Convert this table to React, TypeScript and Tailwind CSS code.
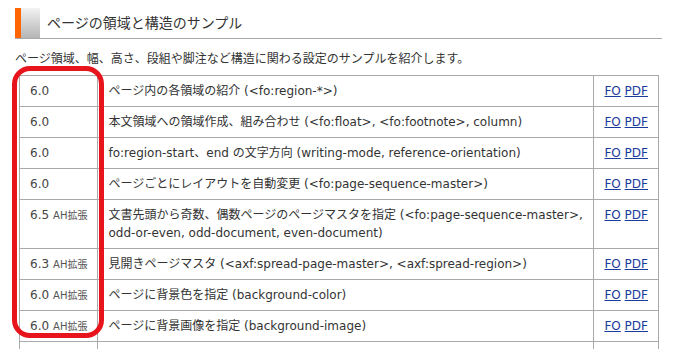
import React from 'react';

type Sample = {
  version: string;
  ext?: boolean;
  lines: string[];
};

const samples: Sample[] = [
  { version: '6.0', lines: ['ページ内の各領域の紹介 (<fo:region-*>)'] },
  { version: '6.0', lines: ['本文領域への領域作成、組み合わせ (<fo:float>, <fo:footnote>, column)'] },
  { version: '6.0', lines: ['fo:region-start、end の文字方向 (writing-mode, reference-orientation)'] },
  { version: '6.0', lines: ['ページごとにレイアウトを自動変更 (<fo:page-sequence-master>)'] },
  {
    version: '6.5',
    ext: true,
    lines: [
      '文書先頭から奇数、偶数ページのページマスタを指定 (<fo:page-sequence-master>,',
      'odd-or-even, odd-document, even-document)',
    ],
  },
  { version: '6.3', ext: true, lines: ['見開きページマスタ (<axf:spread-page-master>, <axf:spread-region>)'] },
  { version: '6.0', ext: true, lines: ['ページに背景色を指定 (background-color)'] },
  { version: '6.0', ext: true, lines: ['ページに背景画像を指定 (background-image)'] },
];

export default function App() {
  return (
    <div
      className="relative h-[349px] overflow-hidden bg-white pl-[15px] pt-[8px] text-[#333]"
      style={{ fontFamily: '"DejaVu Sans", "Noto Sans CJK JP", sans-serif' }}
    >
      {/* Section heading */}
      <div className="flex h-[31px] w-[647px] border-b border-[#aaa]">
        <div className="w-[6px] bg-[#ff6600]" />
        <div className="w-[19px] bg-gradient-to-b from-[#f2f2f2] to-[#b5b5b5]" />
        <h2 className="ml-[7px] pt-[5px] text-[14px] leading-[20px] font-normal text-[#333]">
          ページの領域と構造のサンプル
        </h2>
      </div>

      <p className="mt-[11px] text-[12px] leading-[18px]">
        ページ領域、幅、高さ、段組や脚注など構造に関わる設定のサンプルを紹介します。
      </p>

      <table className="mt-[7px] ml-[4px] w-[640px] border-collapse text-[12px] leading-[18px]">
        <tbody>
          {samples.map((s, i) => (
            <tr key={i}>
              <td className="w-[78px] border border-[#aaa] px-[10px] py-[6px] align-top text-[#444] whitespace-nowrap">
                {s.version}
                {s.ext && <span className="ml-[4px] text-[10px] leading-none text-[#555]">AH拡張</span>}
              </td>
              <td className="border border-[#aaa] px-[10px] py-[6px] align-top">
                {s.lines.map((l, j) => (
                  <div key={j} className="whitespace-nowrap">{l}</div>
                ))}
              </td>
              <td className="w-[64px] border border-[#aaa] px-[10px] py-[6px] align-top whitespace-nowrap">
                <a href="#" className="text-[#1a3a9c] underline">FO</a>{' '}
                <a href="#" className="text-[#1a3a9c] underline">PDF</a>
              </td>
            </tr>
          ))}
          {/* next row continues below the fold */}
          <tr>
            <td className="h-[31px] border border-[#aaa]" />
            <td className="border border-[#aaa]" />
            <td className="border border-[#aaa]" />
          </tr>
        </tbody>
      </table>

      {/* Red highlight around the version column */}
      <div className="pointer-events-none absolute left-[12px] top-[66px] h-[272px] w-[92px] rounded-[18px] border-[5px] border-[#e8141c]" />
    </div>
  );
}
